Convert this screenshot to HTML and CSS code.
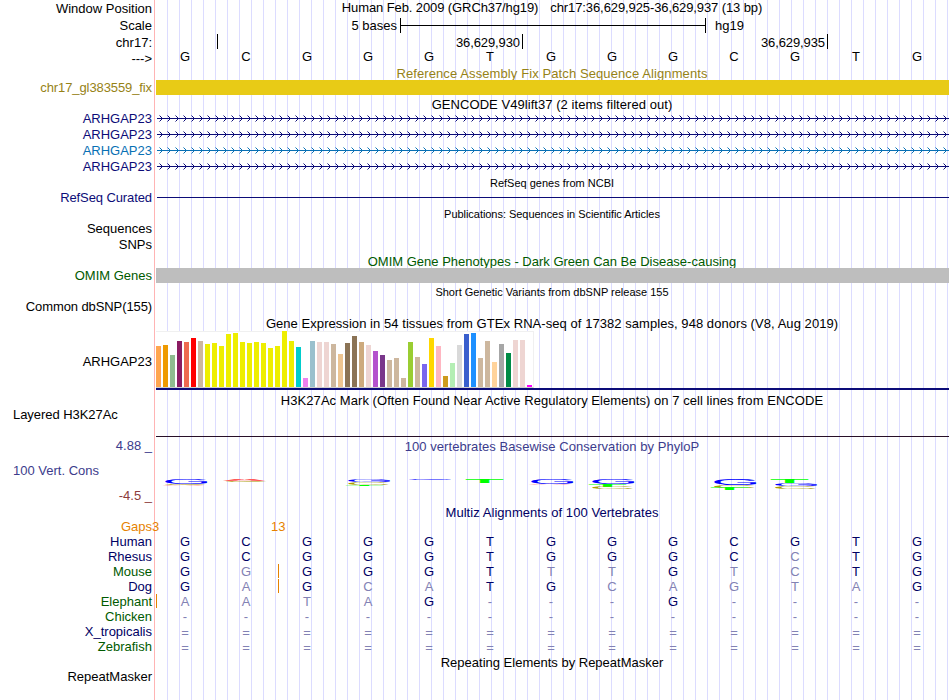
FILE: index.html
```html
<!DOCTYPE html>
<html>
  <head>
    <meta charset="utf-8">
    <title>Human hg19 chr17:36,629,925-36,629,937</title>
    <link rel="stylesheet" href="styles.css">
  </head>

  <body>
    <div class="browser">
      <!-- Ruler -->
      <div class="row h17">
        <div class="label">Window Position</div>
        <div class="title position"><span class="assembly">Human Feb. 2009 (GRCh37/hg19)</span><span class="range">chr17:36,629,925-36,629,937 (13 bp)</span></div>
      </div>
      <div class="row h17">
        <div class="label">Scale</div>
        <div class="track scale">
          <span class="scale-text">5 bases</span>
          <div class="scale-bar"></div>
          <span class="scale-db">hg19</span>
        </div>
      </div>
      <div class="row h17">
        <div class="label">chr17:</div>
        <div class="track ticks">
          <span class="tick"></span>
          <span class="tick">36,629,930</span>
          <span class="tick">36,629,935</span>
        </div>
      </div>
      <div class="row h15">
        <div class="label">---&gt;</div>
        <div class="track bases ruler" data-seq="GCGGGTGGGCGTG"></div>
      </div>

      <!-- Fix patches -->
      <div class="row h14"><div class="title gold wider clipped low1">Reference Assembly Fix Patch Sequence Alignments</div></div>
      <div class="row h15">
        <div class="label gold narrow">chr17_gl383559_fix</div>
        <div class="track patch-bar"></div>
      </div>

      <!-- GENCODE genes -->
      <div class="row h15"><div class="title wide low2">GENCODE V49lift37 (2 items filtered out)</div></div>
      <div class="row h16"><div class="label navy low1">ARHGAP23</div><div class="track gene navy"></div></div>
      <div class="row h16"><div class="label navy low1">ARHGAP23</div><div class="track gene navy"></div></div>
      <div class="row h16"><div class="label blue low1">ARHGAP23</div><div class="track gene blue"></div></div>
      <div class="row h16"><div class="label navy low1">ARHGAP23</div><div class="track gene navy"></div></div>

      <!-- RefSeq -->
      <div class="row h15"><div class="title small low2">RefSeq genes from NCBI</div></div>
      <div class="row h16"><div class="label navy narrow low1">RefSeq Curated</div><div class="track refseq"></div></div>

      <!-- Publications -->
      <div class="row h16"><div class="title small tight low1">Publications: Sequences in Scientific Articles</div></div>
      <div class="row h16"><div class="label">Sequences</div></div>
      <div class="row h15"><div class="label">SNPs</div></div>

      <!-- OMIM -->
      <div class="row h16"><div class="title green clipped low2">OMIM Gene Phenotypes - Dark Green Can Be Disease-causing</div></div>
      <div class="row h15"><div class="label green">OMIM Genes</div><div class="track omim-bar"></div></div>

      <!-- dbSNP -->
      <div class="row h16"><div class="title small low1">Short Genetic Variants from dbSNP release 155</div></div>
      <div class="row h16"><div class="label narrow">Common dbSNP(155)</div></div>

      <!-- GTEx -->
      <div class="row h16"><div class="title wide low1">Gene Expression in 54 tissues from GTEx RNA-seq of 17382 samples, 948 donors (V8, Aug 2019)</div></div>
      <div class="row gtex">
        <div class="label">ARHGAP23</div>
        <div class="track gtex-track"><div class="gtex-chart" id="gtex"></div></div>
      </div>

      <!-- H3K27Ac -->
      <div class="row h18"><div class="title wide low1">H3K27Ac Mark (Often Found Near Active Regulatory Elements) on 7 cell lines from ENCODE</div></div>
      <div class="row h29">
        <div class="label wide-label">Layered H3K27Ac</div>
        <div class="track mark-track"></div>
      </div>

      <!-- Conservation -->
      <div class="row cons">
        <div class="label cons-labels">
          <span class="cons-blue">4.88 _</span>
          <span class="cons-blue cons-name">100 Vert. Cons</span>
          <span class="cons-red">-4.5 _</span>
        </div>
        <div class="track cons-track">
          <div class="cons-title cons-blue wide">100 vertebrates Basewise Conservation by PhyloP</div>
          <svg class="logo" id="logo" width="793" height="16"></svg>
        </div>
      </div>

      <!-- Multiz alignment -->
      <div class="row h15"><div class="title dark wide low1">Multiz Alignments of 100 Vertebrates</div></div>
      <div class="row h15">
        <div class="label orange">Gaps</div>
        <div class="track gaps-track orange"><span class="gap-first">3</span><span class="gap-second">13</span></div>
      </div>
      <div class="row h15"><div class="label dark">Human</div><div class="track bases" data-seq="GCGGGTGGGCGTG"></div></div>
      <div class="row h15"><div class="label dark">Rhesus</div><div class="track bases" data-seq="GCGGGTGGGCCTG"></div></div>
      <div class="row h15"><div class="label green">Mouse</div><div class="track bases insert-2" data-seq="GGGGGTTTGTCTG"></div></div>
      <div class="row h15"><div class="label dark">Dog</div><div class="track bases insert-2" data-seq="GAGCATGCAGTAG"></div></div>
      <div class="row h15"><div class="label green">Elephant</div><div class="track bases insert-0" data-seq="AATAG---G----"></div></div>
      <div class="row h15"><div class="label green">Chicken</div><div class="track bases" data-seq="-------------"></div></div>
      <div class="row h15"><div class="label dark">X_tropicalis</div><div class="track bases low1" data-seq="============="></div></div>
      <div class="row h15"><div class="label green">Zebrafish</div><div class="track bases low1" data-seq="============="></div></div>

      <!-- RepeatMasker -->
      <div class="row h16"><div class="title low1">Repeating Elements by RepeatMasker</div></div>
      <div class="row h14"><div class="label">RepeatMasker</div></div>
    </div>

    <script src="tracks.js"></script>
  </body>
</html>
```
FILE: styles.css
```css
body {
  margin: 0;
  background: #fff;
  font-family: "Liberation Sans", Arial, sans-serif;
  font-size: 13px;
  color: #000;
}
/* Red line beside the labels, then a guide line every 12px */
.browser {
  width: 950px;
  height: 700px;
  overflow: hidden;
  background:
    linear-gradient(to right, #fff 154px, #ffb4b4 154px, #ffb4b4 155px, #fff 155px) 0 0 / 156px 100% no-repeat,
    linear-gradient(to right, #dcdcff 1px, transparent 1px) 11px 0 / 12px 100%;
}
.row {
  display: grid;
  grid-template-columns: 152px 793px;
  grid-template-rows: 100%;
  column-gap: 4px;
  white-space: nowrap;
}
.h14 { height: 14px; line-height: 14px; }
.h15 { height: 15px; line-height: 15px; }
.h16 { height: 16px; line-height: 16px; }
.h17 { height: 17px; line-height: 17px; }
.h18 { height: 18px; line-height: 20px; }
.h29 { height: 29px; }
.label {
  grid-column: 1;
  text-align: right;
}
.title {
  grid-column: 2;
  margin-right: 1px;
  text-align: center;
}
/* Descenders end where the item bar starts */
.clipped { overflow: hidden; }
.track {
  grid-column: 2;
}
.small { font-size: 11px; }
.narrow { letter-spacing: -0.1px; }
.tight { letter-spacing: -0.04px; }
.wide { letter-spacing: 0.055px; }
.wider { letter-spacing: 0.1px; }
.low1 { padding-top: 1px; }
.low2 { padding-top: 2px; }

/* Track colors */
.gold { color: #968216; }
.navy { color: #0c0c78; }
.blue { color: #0870b4; }
.green { color: #005a00; }
.dark { color: #000064; }
.orange { color: #e68200; }
.cons-blue { color: #3c3c8c; }
.cons-red { color: #8c3c3c; }

/* Ruler */
.position {
  display: flex;
  justify-content: center;
  gap: 12px;
  line-height: 16px;
  letter-spacing: -0.1px;
}
.scale {
  display: flex;
  align-items: center;
}
.scale-text {
  width: 241px;
  text-align: right;
}
.scale-bar {
  width: 304px;
  height: 15px;
  margin-left: 3px;
  border-left: 1px solid #000;
  border-right: 1px solid #000;
  background: linear-gradient(#000, #000) 0 7px / 100% 1px no-repeat;
}
.scale-db { margin-left: 9px; }
.ticks { display: flex; }
.tick {
  box-sizing: border-box;
  width: 305px;
  height: 15px;
  padding-right: 2px;
  border-right: 1px solid #000;
  letter-spacing: -0.1px;
  text-align: right;
}
.tick:first-child { width: 62px; }

/* Base letters, one column per position */
.bases {
  display: grid;
  grid-template-columns: repeat(13, 61px);
  margin-left: -1.5px;
  color: #000064;
  text-align: center;
}
.ruler {
  color: #000;
  line-height: 12px;
}
.diff { color: #8282b4; }
.insert-2, .insert-0 {
  margin-left: 0;
  text-indent: -3px;
  background: linear-gradient(#e68200, #e68200) 122px 0 / 1px 14px no-repeat;
}
.insert-0 { background-position: 0 0; }

/* Item bars and genes */
.patch-bar { background: #e8cb16; }
.omim-bar { background: #bebebe; }
.gene {
  display: flex;
  padding-left: 1px;
}
.refseq {
  margin-left: 1px;
  background: linear-gradient(#0c0c78, #0c0c78) 0 8px / 100% 1px no-repeat;
}

/* Tissue expression chart */
.gtex { height: 59px; line-height: 62px; }
.gtex-track { border-bottom: 2px solid #0c0c78; }
.gtex-chart {
  box-sizing: border-box;
  display: flex;
  align-items: flex-end;
  gap: 2px;
  width: 378px;
  height: 57px;
  background: #fff;
  border-bottom: 1px solid #ccc;
  border-right: 1px solid #f0f0f0;
  box-shadow: inset 0 1px #f0f0f0;
}
.bar { width: 5px; }

/* Histone mark */
.wide-label {
  padding-left: 13px;
  line-height: 13px;
  letter-spacing: -0.05px;
  text-align: left;
}
.mark-track { border-bottom: 1px solid #281028; }

/* Conservation */
.cons { height: 67px; }
.cons-labels {
  display: flex;
  flex-direction: column;
  gap: 10px;
  padding-top: 1px;
  line-height: 15px;
}
.cons-name {
  padding-left: 13px;
  text-align: left;
}
.cons-title {
  height: 42px;
  margin-right: 1px;
  line-height: 19px;
  text-align: center;
}
.logo {
  display: block;
  font-size: 62px;
}
.logo .stem { font-weight: bold; }

/* Gap counts */
.gaps-track { display: flex; }
.gap-first {
  width: 119px;
  margin-left: -4px;
}
```
FILE: tracks.js
```js
// Base letters; anything that differs from the human sequence is dimmed
const human = 'GCGGGTGGGCGTG';
document.querySelectorAll('.bases').forEach(row => {
  [...row.dataset.seq].forEach((base, i) => {
    const cell = document.createElement('span');
    cell.textContent = base;
    if (base !== human[i]) cell.className = 'diff';
    row.appendChild(cell);
  });
});

// Gene lines with strand arrows
document.querySelectorAll('.gene').forEach(gene => {
  let d = 'M0 8.5H792';
  for (let x = 2; x < 790; x += 8) {
    d += `M${x + 0.5} 5.5l3 3l-3 3`;
  }
  gene.innerHTML = `<svg width="792" height="16"><path d="${d}" fill="none" stroke="currentColor"/></svg>`;
});

// Tissue expression: [height, color]
const tissues = [
  [41, '#ffa54f'], [42, '#ee9a00'], [32, '#8fbc8f'], [46, '#8b1c62'], [45, '#ee6a50'], [49, '#ff0000'],
  [46, '#cdb79e'], [43, '#eeee00'], [44, '#eeee00'], [41, '#eeee00'], [53, '#eeee00'], [54, '#eeee00'],
  [45, '#eeee00'], [44, '#eeee00'], [45, '#eeee00'], [44, '#eeee00'], [39, '#eeee00'], [41, '#eeee00'],
  [56, '#eeee00'], [46, '#eeee00'], [40, '#00cdcd'], [9, '#ee82ee'], [46, '#9ac0cd'], [45, '#eed5d2'],
  [45, '#eed5d2'], [43, '#cdb79e'], [33, '#eec591'], [44, '#8b7355'], [51, '#8b7355'], [45, '#cdaa7d'],
  [42, '#eed5d2'], [36, '#b452cd'], [32, '#7a378b'], [27, '#cdb79e'], [29, '#cdb79e'], [9, '#cdb79e'],
  [45, '#9acd32'], [30, '#cdb79e'], [23, '#7a67ee'], [49, '#ffd700'], [41, '#ffb6c1'], [11, '#cd9b1d'],
  [24, '#b4eeb4'], [42, '#d9d9d9'], [53, '#3a5fcd'], [54, '#1e90ff'], [29, '#cdb79e'], [46, '#cdb79e'],
  [25, '#ffd39b'], [43, '#a6a6a6'], [34, '#008b45'], [47, '#eed5d2'], [47, '#eed5d2'], [2, '#ff00ff']
];
document.getElementById('gtex').innerHTML = tissues
  .map(([h, color]) => `<div class="bar" style="height:${h}px;background:${color}"></div>`)
  .join('');

// Sequence logo: [letter, x, top, height]
const colors = { A: '#ff5a5a', C: '#0000ff', G: '#0000ff', T: '#00ff00', c: '#aaa000' };
const letters = [
  ['G', 8, 0, 5], ['c', 8, 5, 1.4], ['A', 8, 6, 0.8],
  ['A', 69, 0, 2], ['c', 69, 1.5, 1],
  ['G', 191, 0, 3], ['c', 191, 3, 2.6], ['T', 191, 5.5, 1],
  ['G', 252, 0, 1],
  ['T', 311, 0, 4],
  ['G', 374, 0, 5], ['A', 374, 4.8, 1],
  ['G', 435, 0, 5], ['T', 434, 5, 3], ['c', 435, 8, 2],
  ['G', 557, 0, 6], ['c', 557, 6, 3], ['T', 556, 9, 2],
  ['T', 616, 0, 4], ['G', 618, 4, 3], ['c', 618, 7, 3]
];
document.getElementById('logo').innerHTML = letters
  .map(([l, x, top, h]) =>
    `<text${l === 'T' ? ' class="stem"' : ''} transform="translate(${x - 2} ${top + h}) scale(1.03 ${h / 45})" fill="${colors[l]}">${l.toUpperCase()}</text>`)
  .join('');
```
